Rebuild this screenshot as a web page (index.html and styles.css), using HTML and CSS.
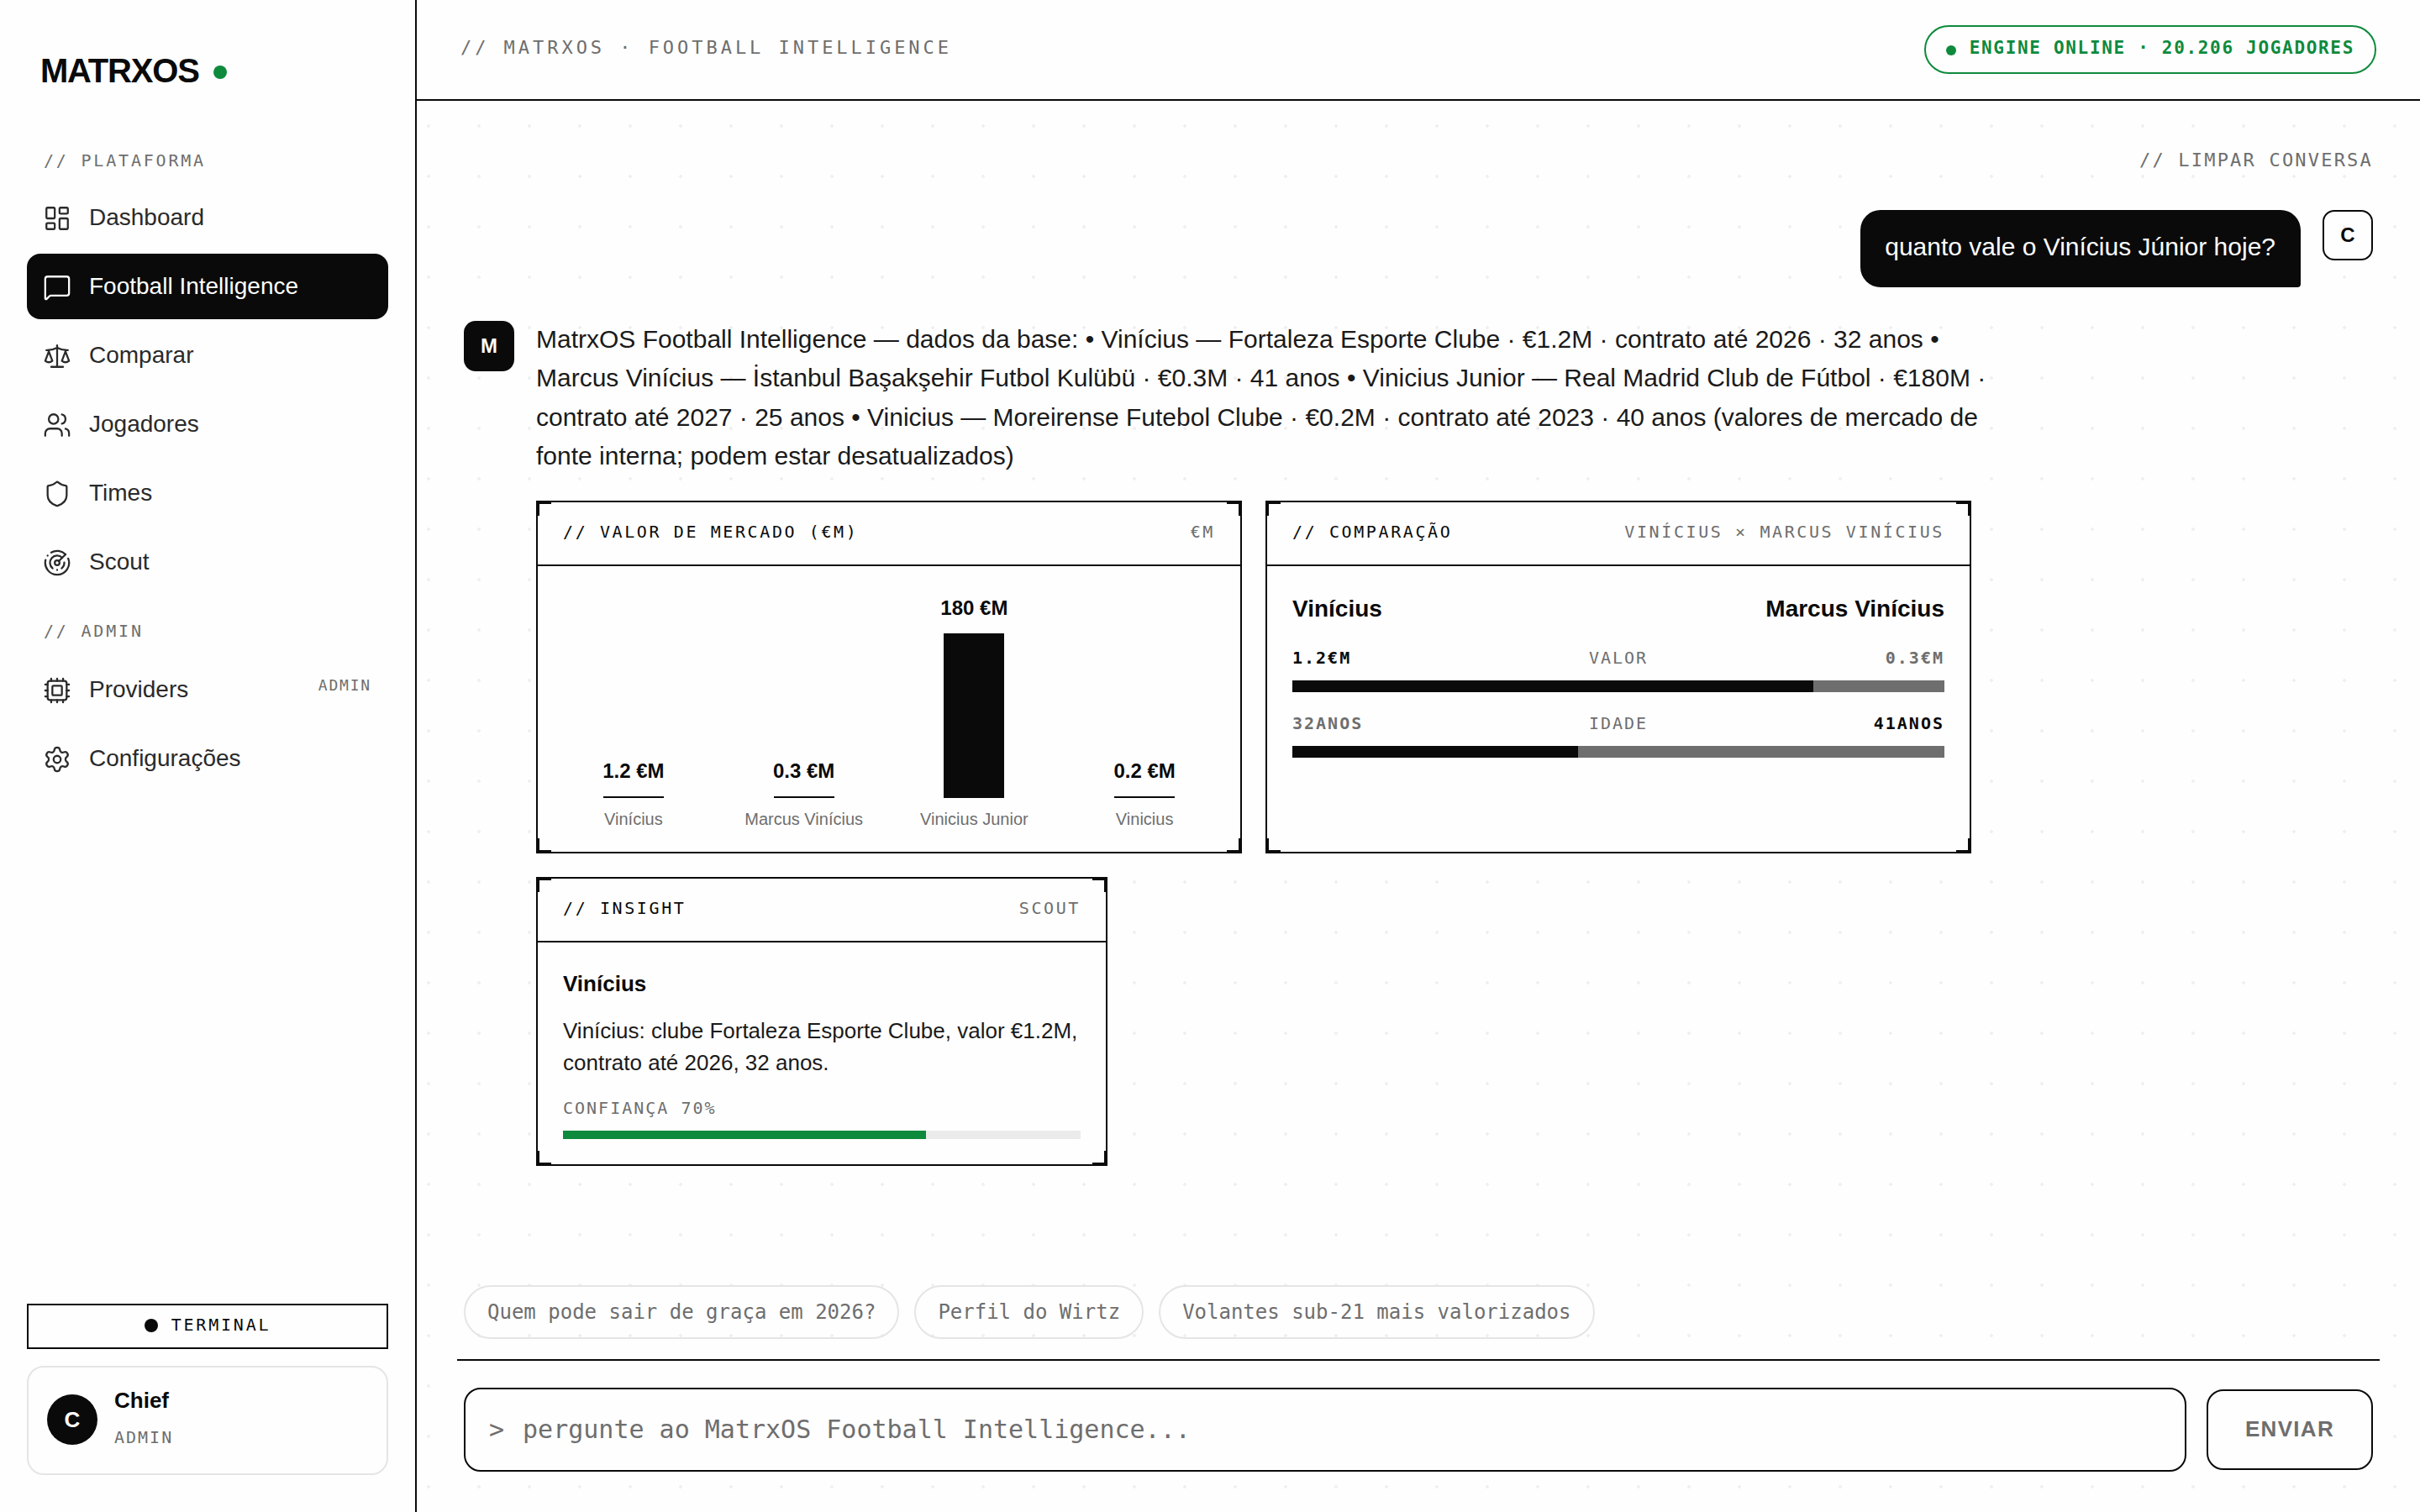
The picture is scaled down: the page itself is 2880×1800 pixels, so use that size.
FILE: index.html
```
<!DOCTYPE html>
<html lang="pt-BR">
<head>
  <meta charset="UTF-8" />
  <meta name="viewport" content="width=device-width, initial-scale=1.0" />
  <title>MatrxOS · Football Intelligence</title>
  <link rel="stylesheet" href="styles.css">
</head>
<body>
  <aside class="sidebar">
    <div class="logo">MATRXOS<span class="logo-dot"></span></div>

    <nav class="nav">
      <div class="nav-label">// PLATAFORMA</div>
      <a class="nav-item">
        <svg class="icon" viewBox="0 0 24 24"><rect x="3" y="3" width="7" height="9" rx="1"/><rect x="14" y="3" width="7" height="5" rx="1"/><rect x="14" y="12" width="7" height="9" rx="1"/><rect x="3" y="16" width="7" height="5" rx="1"/></svg>
        Dashboard
      </a>
      <a class="nav-item active">
        <svg class="icon" viewBox="0 0 24 24"><path d="M22 17a2 2 0 0 1-2 2H6.828a2 2 0 0 0-1.414.586l-2.202 2.202A.71.71 0 0 1 2 21.286V5a2 2 0 0 1 2-2h16a2 2 0 0 1 2 2z"/></svg>
        Football Intelligence
      </a>
      <a class="nav-item">
        <svg class="icon" viewBox="0 0 24 24"><path d="M12 3v18"/><path d="m19 8 3 8a5 5 0 0 1-6 0zV7"/><path d="M3 7h1a17 17 0 0 0 8-2 17 17 0 0 0 8 2h1"/><path d="m5 8 3 8a5 5 0 0 1-6 0zV7"/><path d="M7 21h10"/></svg>
        Comparar
      </a>
      <a class="nav-item">
        <svg class="icon" viewBox="0 0 24 24"><path d="M16 21v-2a4 4 0 0 0-4-4H6a4 4 0 0 0-4 4v2"/><path d="M16 3.128a4 4 0 0 1 0 7.744"/><path d="M22 21v-2a4 4 0 0 0-3-3.87"/><circle cx="9" cy="7" r="4"/></svg>
        Jogadores
      </a>
      <a class="nav-item">
        <svg class="icon" viewBox="0 0 24 24"><path d="M20 13c0 5-3.5 7.5-7.66 8.95a1 1 0 0 1-.67-.01C7.5 20.5 4 18 4 13V6a1 1 0 0 1 1-1c2 0 4.5-1.2 6.24-2.72a1.17 1.17 0 0 1 1.52 0C14.51 3.81 17 5 19 5a1 1 0 0 1 1 1z"/></svg>
        Times
      </a>
      <a class="nav-item">
        <svg class="icon" viewBox="0 0 24 24"><path d="M19.07 4.93A10 10 0 0 0 6.99 3.34"/><path d="M4 6h.01"/><path d="M2.29 9.62A10 10 0 1 0 21.31 8.35"/><path d="M16.24 7.76A6 6 0 1 0 8.23 16.67"/><path d="M12 18h.01"/><path d="M17.99 11.66A6 6 0 0 1 15.77 16.67"/><circle cx="12" cy="12" r="2"/><path d="m13.41 10.59 5.66-5.66"/></svg>
        Scout
      </a>
      <div class="nav-label nav-label-admin">// ADMIN</div>
      <a class="nav-item">
        <svg class="icon" viewBox="0 0 24 24"><path d="M12 20v2M12 2v2M17 20v2M17 2v2M2 12h2M2 17h2M2 7h2M20 12h2M20 17h2M20 7h2M7 20v2M7 2v2"/><rect x="4" y="4" width="16" height="16" rx="2"/><rect x="8" y="8" width="8" height="8" rx="1"/></svg>
        Providers
        <span class="tag">ADMIN</span>
      </a>
      <a class="nav-item">
        <svg class="icon" viewBox="0 0 24 24"><path d="M9.671 4.136a2.34 2.34 0 0 1 4.659 0 2.34 2.34 0 0 0 3.319 1.915 2.34 2.34 0 0 1 2.33 4.033 2.34 2.34 0 0 0 0 3.831 2.34 2.34 0 0 1-2.33 4.033 2.34 2.34 0 0 0-3.319 1.915 2.34 2.34 0 0 1-4.659 0 2.34 2.34 0 0 0-3.32-1.915 2.34 2.34 0 0 1-2.33-4.033 2.34 2.34 0 0 0 0-3.831A2.34 2.34 0 0 1 6.35 6.051a2.34 2.34 0 0 0 3.319-1.915"/><circle cx="12" cy="12" r="3"/></svg>
        Configurações
      </a>
    </nav>

    <button class="terminal" type="button"><span class="terminal-dot"></span><span class="terminal-text">TERMINAL</span></button>
    <div class="user-card">
      <div class="user-avatar">C</div>
      <div class="user-info">
        <div class="user-name">Chief</div>
        <div class="user-role">ADMIN</div>
      </div>
    </div>
  </aside>

  <div class="page">
    <header class="topbar">
      <div class="topbar-title">// MATRXOS · FOOTBALL INTELLIGENCE</div>
      <div class="status"><span class="status-dot"></span><span class="status-text">ENGINE ONLINE · 20.206 JOGADORES</span></div>
    </header>

    <main class="chat">
      <button class="clear" type="button">// LIMPAR CONVERSA</button>

      <div class="msg msg-user">
        <div class="bubble">quanto vale o Vinícius Júnior hoje?</div>
        <div class="avatar avatar-user">C</div>
      </div>

      <div class="msg">
        <div class="avatar">M</div>
        <div class="answer">
          <p class="answer-text">MatrxOS Football Intelligence — dados da base: • Vinícius — Fortaleza Esporte Clube · €1.2M · contrato até 2026 · 32 anos • Marcus Vinícius — İstanbul Başakşehir Futbol Kulübü · €0.3M · 41 anos • Vinicius Junior — Real Madrid Club de Fútbol · €180M · contrato até 2027 · 25 anos • Vinicius — Moreirense Futebol Clube · €0.2M · contrato até 2023 · 40 anos (valores de mercado de fonte interna; podem estar desatualizados)</p>

          <div class="cards">
            <section class="card">
              <div class="card-head"><span>// VALOR DE MERCADO (€M)</span><span class="muted">€M</span></div>
              <div class="chart">
                <div class="col"><b>1.2 €M</b><div class="bar"></div><span>Vinícius</span></div>
                <div class="col"><b>0.3 €M</b><div class="bar"></div><span>Marcus Vinícius</span></div>
                <div class="col"><b>180 €M</b><div class="bar" style="height: 196px"></div><span>Vinicius Junior</span></div>
                <div class="col"><b>0.2 €M</b><div class="bar"></div><span>Vinicius</span></div>
              </div>
            </section>

            <section class="card">
              <div class="card-head"><span>// COMPARAÇÃO</span><span class="muted">VINÍCIUS × MARCUS VINÍCIUS</span></div>
              <div class="compare">
                <div class="names"><span>Vinícius</span><span>Marcus Vinícius</span></div>
                <div class="metric"><b class="win">1.2€M</b><span>VALOR</span><b>0.3€M</b></div>
                <div class="split"><div style="width: 79.9%"></div></div>
                <div class="metric"><b>32ANOS</b><span>IDADE</span><b class="win">41ANOS</b></div>
                <div class="split"><div style="width: 43.84%"></div></div>
              </div>
            </section>

            <section class="card card-small">
              <div class="card-head"><span>// INSIGHT</span><span class="muted">SCOUT</span></div>
              <div class="insight">
                <h3>Vinícius</h3>
                <p>Vinícius: clube Fortaleza Esporte Clube, valor €1.2M, contrato até 2026, 32 anos.</p>
                <div class="confidence">CONFIANÇA 70%</div>
                <div class="track"><div style="width: 70.1%"></div></div>
              </div>
            </section>
          </div>
        </div>
      </div>

      <div class="suggestions">
        <button type="button">Quem pode sair de graça em 2026?</button>
        <button type="button">Perfil do Wirtz</button>
        <button type="button">Volantes sub-21 mais valorizados</button>
      </div>

      <form class="composer" onsubmit="return false;">
        <label class="prompt">
          <span>&gt;</span>
          <input type="text" placeholder="pergunte ao MatrxOS Football Intelligence..." aria-label="Mensagem" />
        </label>
        <button class="send" type="button">ENVIAR</button>
      </form>
    </main>
  </div>
</body>
</html>
```
FILE: styles.css
```
:root {
  --ink: #0a0a0a;
  --text: #1a1a1a;
  --nav: #2a2a2a;
  --muted: #6e6e6e;
  --line: #e5e5e5;
  --bg: #fefefe;
  --green: #0e8a3c;
  --sans: 'Liberation Sans', Arial, sans-serif;
  --mono: 'DejaVu Sans Mono', monospace;
}
* {
  box-sizing: border-box;
}
body {
  margin: 0;
  height: 1800px;
  display: flex;
  overflow: hidden;
  background-color: var(--bg);
  background-image: radial-gradient(circle, #f0f0f0 2px, transparent 2px);
  background-size: 60px 60px;
  font-family: var(--sans);
  color: var(--ink);
}
button, input {
  font: inherit;
  color: inherit;
  background: none;
  border: none;
  padding: 0;
  margin: 0;
}

/* Sidebar */
.sidebar {
  width: 496px;
  flex-shrink: 0;
  display: flex;
  flex-direction: column;
  padding: 61px 32px 44px;
  background: var(--bg);
  border-right: 2px solid var(--ink);
}
.logo {
  display: flex;
  align-items: center;
  gap: 17px;
  padding-left: 16px;
  font-size: 40px;
  line-height: 46px;
  font-weight: 700;
  letter-spacing: -1.2px;
}
.logo-dot {
  width: 16px;
  height: 16px;
  margin-top: 4px;
  border-radius: 50%;
  background: var(--green);
}
.nav {
  flex: 1;
  padding-top: 72px;
}
.nav-label {
  padding-left: 20px;
  margin-bottom: 17px;
  font-family: var(--mono);
  font-size: 20px;
  line-height: 24px;
  letter-spacing: 0.14em;
  color: var(--muted);
}
.nav-label-admin {
  padding-top: 27px;
  margin-bottom: 19px;
}
.nav-item {
  display: flex;
  align-items: center;
  gap: 22px;
  height: 78px;
  margin-bottom: 4px;
  padding: 0 20px;
  border-radius: 16px;
  font-size: 28px;
  color: var(--nav);
}
.nav-item.active {
  background: var(--ink);
  color: var(--bg);
}
.icon {
  width: 34px;
  height: 34px;
  margin: 2px -1px 0;
  fill: none;
  stroke: currentColor;
  stroke-width: 1.6;
  stroke-linecap: round;
  stroke-linejoin: round;
}
.tag {
  margin-left: auto;
  padding-bottom: 11px;
  font-family: var(--mono);
  font-size: 18px;
  letter-spacing: 0.1em;
  color: var(--muted);
}
.terminal {
  display: flex;
  align-items: center;
  justify-content: center;
  gap: 16px;
  height: 54px;
  margin-bottom: 20px;
  border: 2px solid var(--ink);
  font-family: var(--mono);
  font-size: 20px;
  letter-spacing: 0.14em;
}
.terminal-dot {
  width: 16px;
  height: 16px;
  margin-bottom: 2px;
  border-radius: 50%;
  background: var(--ink);
}
.terminal-text {
  padding-bottom: 4px;
}
.user-card {
  display: flex;
  align-items: center;
  gap: 20px;
  height: 130px;
  padding: 0 22px;
  border: 2px solid var(--line);
  border-radius: 20px;
}
.user-avatar {
  display: grid;
  place-items: center;
  width: 60px;
  height: 60px;
  margin-bottom: 2px;
  border-radius: 50%;
  background: var(--ink);
  color: var(--bg);
  font-size: 26px;
  font-weight: 700;
}
.user-info {
  padding-bottom: 7px;
}
.user-name {
  font-size: 26px;
  line-height: 30px;
  font-weight: 700;
}
.user-role {
  margin-top: 17px;
  font-family: var(--mono);
  font-size: 20px;
  line-height: 24px;
  letter-spacing: 0.1em;
  color: var(--muted);
}

/* Topbar */
.page {
  flex: 1;
  display: flex;
  flex-direction: column;
}
.topbar {
  display: flex;
  align-items: center;
  justify-content: space-between;
  height: 120px;
  padding: 0 52px;
  background: var(--bg);
  border-bottom: 2px solid var(--ink);
  font-family: var(--mono);
}
.topbar-title {
  padding-bottom: 5px;
  font-size: 22px;
  letter-spacing: 0.18em;
  color: var(--muted);
}
.status {
  display: flex;
  align-items: center;
  gap: 16px;
  height: 58px;
  padding: 0 24px;
  border: 2px solid var(--green);
  border-radius: 29px;
  color: var(--green);
  font-size: 21px;
  font-weight: 700;
  letter-spacing: 0.08em;
}
.status-dot {
  width: 12px;
  height: 12px;
  margin-top: 2px;
  border-radius: 50%;
  background: var(--green);
}
.status-text {
  padding-bottom: 5px;
}

/* Chat */
.chat {
  flex: 1;
  display: flex;
  flex-direction: column;
  padding: 57px 56px 40px;
}
.clear {
  align-self: flex-end;
  margin-bottom: 45px;
  font-family: var(--mono);
  font-size: 22px;
  line-height: 28px;
  letter-spacing: 0.1em;
  color: var(--muted);
}
.msg {
  display: flex;
  align-items: flex-start;
  gap: 26px;
}
.msg-user {
  justify-content: flex-end;
  margin-bottom: 40px;
}
.bubble {
  height: 92px;
  padding: 21px 30px 0 29px;
  border-radius: 24px 24px 4px 24px;
  background: var(--ink);
  color: var(--bg);
  font-size: 30px;
  line-height: 46.5px;
}
.avatar {
  display: grid;
  place-items: center;
  width: 60px;
  height: 60px;
  flex-shrink: 0;
  border-radius: 14px;
  background: var(--ink);
  color: var(--bg);
  font-size: 24px;
  font-weight: 700;
}
.avatar-user {
  border: 2px solid var(--ink);
  background: none;
  color: var(--ink);
}
.answer {
  width: 1740px;
}
.answer-text {
  margin: -1.5px 0 29.5px;
  font-size: 30px;
  line-height: 46.5px;
  color: var(--text);
}

/* Cards */
.cards {
  display: flex;
  flex-wrap: wrap;
  gap: 28px;
}
.card {
  --c: linear-gradient(var(--ink), var(--ink));
  width: 840px;
  height: 420px;
  border: 2px solid var(--ink);
  background:
    var(--c) left top / 16px 2px, var(--c) left top / 2px 16px,
    var(--c) right top / 16px 2px, var(--c) right top / 2px 16px,
    var(--c) left bottom / 16px 2px, var(--c) left bottom / 2px 16px,
    var(--c) right bottom / 16px 2px, var(--c) right bottom / 2px 16px,
    var(--bg);
  background-repeat: no-repeat;
  background-origin: padding-box;
}
.card-small {
  width: 680px;
  height: 344px;
}
.card-head {
  display: flex;
  align-items: center;
  justify-content: space-between;
  height: 76px;
  padding: 0 30px 4px;
  border-bottom: 2px solid var(--ink);
  font-family: var(--mono);
  font-size: 20px;
  line-height: 24px;
  letter-spacing: 0.13em;
}
.muted {
  color: var(--muted);
}
.chart {
  display: flex;
  align-items: flex-end;
  gap: 35px;
  height: 340px;
  padding: 0 30px 27px;
}
.col {
  flex: 1 1 0;
  display: flex;
  flex-direction: column;
  align-items: center;
  font-size: 20px;
  line-height: 24px;
  white-space: nowrap;
  color: var(--muted);
}
.col b {
  margin-bottom: 16px;
  font-size: 24px;
  line-height: 28px;
  color: var(--ink);
}
.bar {
  width: 72px;
  height: 2px;
  margin-bottom: 13px;
  background: var(--ink);
}
.compare {
  padding: 35px 30px 0;
}
.names {
  display: flex;
  justify-content: space-between;
  margin-bottom: 30px;
  font-size: 28px;
  line-height: 32px;
  font-weight: 700;
}
.metric {
  display: flex;
  justify-content: space-between;
  font-family: var(--mono);
  font-size: 20px;
  line-height: 24px;
  letter-spacing: 0.1em;
  color: var(--muted);
}
.win {
  color: var(--ink);
}
.split {
  height: 14px;
  margin: 15px 0 25px;
  background: var(--muted);
}
.split div, .track div {
  height: 100%;
  background: var(--ink);
}
.insight {
  padding: 34px 30px 0;
}
.insight h3 {
  margin: 0 0 22px;
  font-size: 26px;
  line-height: 30px;
}
.insight p {
  margin: 0 0 23px;
  font-size: 26px;
  line-height: 38px;
  color: var(--text);
}
.confidence {
  margin-bottom: 15px;
  font-family: var(--mono);
  font-size: 20px;
  line-height: 24px;
  letter-spacing: 0.1em;
  color: var(--muted);
}
.track {
  height: 10px;
  background: #ebebeb;
}
.track div {
  background: var(--green);
}

/* Composer */
.suggestions {
  display: flex;
  gap: 18px;
  margin-top: auto;
  margin-bottom: 24px;
}
.suggestions button {
  height: 64px;
  padding: 0 26px;
  border: 2px solid var(--line);
  border-radius: 32px;
  font-family: var(--mono);
  font-size: 24px;
  color: var(--muted);
}
.composer {
  display: flex;
  align-items: center;
  gap: 24px;
  margin: 0 -8px;
  padding: 32px 8px 8px;
  border-top: 2px solid var(--ink);
  background: var(--bg);
}
.prompt {
  flex: 1;
  display: flex;
  align-items: center;
  gap: 22px;
  height: 100px;
  padding: 0 28px 2px;
  border: 2px solid var(--ink);
  border-radius: 20px;
  font-family: var(--mono);
  font-size: 30px;
  color: var(--muted);
}
.prompt input {
  flex: 1;
  outline: none;
}
.prompt input::placeholder {
  color: var(--muted);
  opacity: 1;
}
.send {
  height: 96px;
  padding: 0 44px 2px;
  border: 2px solid var(--ink);
  border-radius: 20px;
  font-size: 26px;
  font-weight: 700;
  letter-spacing: 0.05em;
  color: var(--muted);
}
```
